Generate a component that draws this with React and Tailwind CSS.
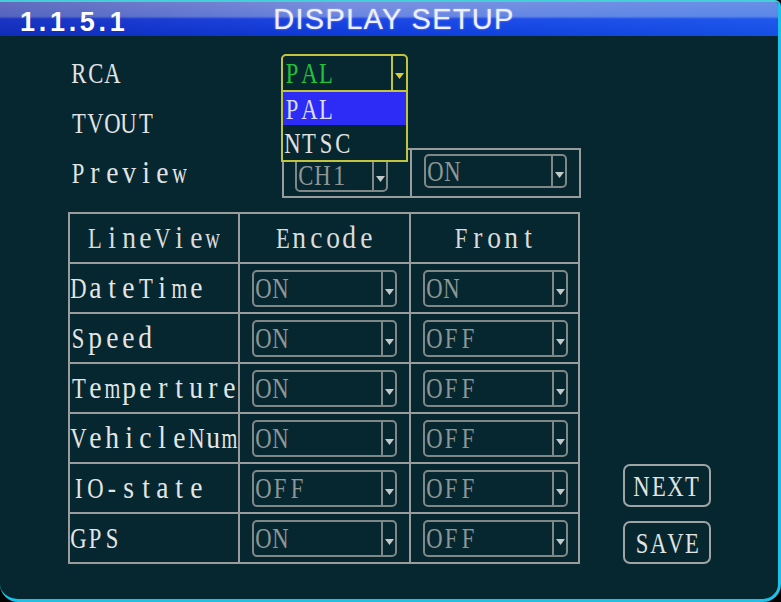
import React from "react";

function charClass(c) {
  if ("mwMW".includes(c)) return "scale-x-[0.7]";
  if (/[A-Z]/.test(c)) return "scale-x-[0.78]";
  if (/[a-z]/.test(c)) return "scale-x-[0.95] scale-y-[1.07] origin-[50%_82%]";
  return "scale-x-[0.85]";
}

function T({ children, className = "" }) {
  return (
    <span className={"inline-flex font-['Liberation_Serif',serif] text-[29px] leading-none whitespace-nowrap " + className}>
      {[...children].map((c, i) => (
        <span key={i} className="inline-flex w-[16.8px] justify-center">
          <span className={"inline-block shrink-0 " + charClass(c)}>{c}</span>
        </span>
      ))}
    </span>
  );
}

function Tri({ className }) {
  return (
    <svg width="9" height="6" viewBox="0 0 9 6" className={className}>
      <polygon points="0,0 9,0 4.5,6" fill="currentColor" />
    </svg>
  );
}

function Box({ value, boxClass, textClass = "pl-[1px]" }) {
  return (
    <div className={"flex rounded-[5px] border-2 border-[#7f8787] " + boxClass}>
      <div className={"flex-1 flex items-center text-[#8d9797] overflow-hidden " + textClass}>
        <T className="pt-[1px]">{value}</T>
      </div>
      <div className="w-[14px] border-l-2 border-[#7f8787] flex items-center justify-center text-[#c4c8c8]">
        <Tri className="translate-y-[4px]" />
      </div>
    </div>
  );
}

function Cell({ children, className = "" }) {
  return <div className={"bg-[#072730] flex items-center " + className}>{children}</div>;
}

const rows = [
  ["DateTime", "ON", "ON"],
  ["Speed", "ON", "OFF"],
  ["Temperture", "ON", "OFF"],
  ["VehicleNum", "ON", "OFF"],
  ["IO-state", "OFF", "OFF"],
  ["GPS", "ON", "OFF"],
];

export default function App() {
  return (
    <div className="w-[781px] h-[602px] bg-black overflow-hidden">
      <div className="w-[781px] h-[602px] flex flex-col overflow-hidden bg-[#072730] border-t-2 border-r-[3px] border-b-[3px] border-l-0 border-t-[#44cfd8] border-r-[#19c2e6] border-b-[#19c2e6] rounded-tr-[6px] rounded-br-[18px] rounded-bl-[18px]">
        {/* Header */}
        <div className="h-[34px] shrink-0 grid grid-cols-[1fr_auto_1fr] items-center bg-[linear-gradient(to_right,rgba(20,0,90,0.25),rgba(0,0,0,0)_45%,rgba(40,140,255,0.25)),linear-gradient(to_bottom,#7d90de_0%,#6a86e2_42%,#1d46e6_50%,#0d3ad8_100%)]">
          <div className="pl-[20px] pt-[7px] font-['Liberation_Sans',Arial,sans-serif] font-bold text-[27px] leading-none tracking-[3.7px] text-white">
            1.1.5.1
          </div>
          <div className="pl-[10px] font-['Liberation_Sans',Arial,sans-serif] text-[29px] leading-none tracking-[1.3px] text-[#eef0ff] [text-shadow:0_0_2px_rgba(255,255,255,0.5)]">
            DISPLAY SETUP
          </div>
          <div />
        </div>

        {/* Body */}
        <div className="flex-1 pl-[68px] pt-[12px] text-[#e2e4e4]">
          {/* RCA */}
          <div className="flex h-[50px]">
            <div className="w-[213px] pl-[2px] flex items-center">
              <T className="pt-[1px]">RCA</T>
            </div>
            <div className="relative z-10 pt-[6px]">
              <div className="flex w-[127px] h-[38px] rounded-t-[5px] border-2 border-[#c4c43c] bg-[#072730]">
                <div className="flex-1 flex items-center pl-[1px] text-[#22c23a]">
                  <T className="pt-[1px]">PAL</T>
                </div>
                <div className="w-[15px] border-l-2 border-[#c4c43c] flex items-center justify-center text-[#d6d040]">
                  <Tri className="translate-y-[3px]" />
                </div>
              </div>
              <div className="absolute left-0 top-[44px] w-[127px] h-[70px] border-2 border-t-0 border-[#c4c43c] bg-[#072730] flex flex-col">
                <div className="h-[33px] bg-[#2c2cf6] flex items-center pl-[1px] text-[#dcdcf0]">
                  <T className="pt-[1px]">PAL</T>
                </div>
                <div className="flex-1 flex items-center pl-[1px] text-[#e0e2e2]">
                  <T className="pt-[1px]">NTSC</T>
                </div>
              </div>
            </div>
          </div>

          {/* TVOUT */}
          <div className="flex h-[50px]">
            <div className="w-[213px] pl-[2px] flex items-center">
              <T className="pt-[1px]">TVOUT</T>
            </div>
          </div>

          {/* Preview */}
          <div className="flex h-[50px]">
            <div className="w-[214px] pl-[2px] flex items-center">
              <T className="pt-[1px]">Preview</T>
            </div>
            <div className="grid grid-cols-[126px_167px] gap-[2px] p-[2px] bg-[#9a9c9c] h-[50px]">
              <div className="bg-[#072730] pl-[11px] pt-[7px]">
                <Box value="CH1" boxClass="w-[93px] h-[35px]" textClass="pl-0" />
              </div>
              <div className="bg-[#072730] pl-[12px] pt-[4px]">
                <Box value="ON" boxClass="w-[143px] h-[34px]" />
              </div>
            </div>
          </div>

          {/* Table + buttons */}
          <div className="flex mt-[14px]">
            <div className="grid grid-cols-[168px_169px_167px] auto-rows-[48px] gap-[2px] p-[2px] bg-[#9a9c9c]">
              <Cell className="justify-center"><T className="pt-[1px] text-[#dadcdc]">LineView</T></Cell>
              <Cell className="justify-center"><T className="pt-[1px] text-[#dadcdc]">Encode</T></Cell>
              <Cell className="justify-center"><T className="pt-[1px] text-[#dadcdc]">Front</T></Cell>
              {rows.map(([label, enc, front]) => (
                <React.Fragment key={label}>
                  <Cell className="overflow-visible">
                    <T className="pt-[1px] text-[#e4e6e6]">{label}</T>
                  </Cell>
                  <Cell className="pl-[12px]">
                    <Box value={enc} boxClass="w-[145px] h-[37px]" />
                  </Cell>
                  <Cell className="pl-[12px]">
                    <Box value={front} boxClass="w-[145px] h-[37px]" />
                  </Cell>
                </React.Fragment>
              ))}
            </div>
            <div className="self-end ml-[43px] flex flex-col gap-[14px]">
              <div className="w-[88px] h-[43px] rounded-[7px] border-2 border-[#9fa4a4] flex items-center justify-center text-[#e0e4e4]">
                <T className="pt-[1px]">NEXT</T>
              </div>
              <div className="w-[88px] h-[43px] rounded-[7px] border-2 border-[#9fa4a4] flex items-center justify-center text-[#e0e4e4]">
                <T className="pt-[1px]">SAVE</T>
              </div>
            </div>
          </div>
        </div>
      </div>
    </div>
  );
}
